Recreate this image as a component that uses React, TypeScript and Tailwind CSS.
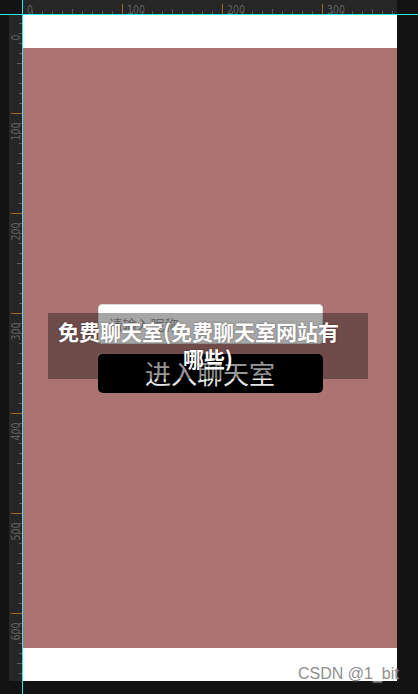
const topTicks = Array.from({ length: 38 }, (_, k) => k);
const leftTicks = Array.from({ length: 67 }, (_, k) => k);

function TopRuler() {
  return (
    <svg width="374" height="14" className="block bg-[#262626]">
      {topTicks.map((k) => {
        const x = 10 * k - 0.5;
        if (k % 10 === 0) {
          const label = String(k * 10);
          return (
            <g key={k}>
              <line x1={x} y1="4" x2={x} y2="14" stroke="#9a6a2a" strokeWidth="1" />
              <text
                x={x + 4.5}
                y="13.5"
                fontSize="13"
                fill="#606060"
                fontFamily="DejaVu Sans, sans-serif"
                textLength={6 * label.length}
                lengthAdjust="spacingAndGlyphs"
              >
                {label}
              </text>
            </g>
          );
        }
        const y1 = k % 5 === 0 ? 9 : 11;
        return <line key={k} x1={x} y1={y1} x2={x} y2="14" stroke="#5a5a5a" strokeWidth="1" />;
      })}
    </svg>
  );
}

function LeftRuler() {
  return (
    <svg width="13" height="666" className="block bg-[#262626]">
      {leftTicks.map((k) => {
        const y = 10 * k - 1.5;
        if (k % 10 === 0) {
          const label = String(k * 10);
          return (
            <g key={k}>
              <line x1="2" y1={y} x2="13" y2={y} stroke="#9a6a2a" strokeWidth="1" />
              <text
                transform={`translate(10.5 ${y + 27}) rotate(-90)`}
                fontSize="12"
                fill="#606060"
                fontFamily="DejaVu Sans, sans-serif"
                textLength={6 * label.length}
                lengthAdjust="spacingAndGlyphs"
              >
                {label}
              </text>
            </g>
          );
        }
        const x1 = k % 5 === 0 ? 8 : 10;
        return <line key={k} x1={x1} y1={y} x2="13" y2={y} stroke="#5a5a5a" strokeWidth="1" />;
      })}
    </svg>
  );
}

export default function App() {
  return (
    <div className="relative grid h-[694px] w-[418px] grid-cols-[22px_1px_374px_1fr] grid-rows-[14px_1px_666px_1fr] overflow-hidden bg-[#131313] font-['Noto_Sans_CJK_SC',sans-serif]">
      <div className="col-start-3 row-start-1">
        <TopRuler />
      </div>
      <div className="col-start-1 row-start-3 pl-[9px]">
        <LeftRuler />
      </div>

      <div className="col-start-3 row-start-3 flex flex-col bg-white">
        <div className="h-[33px]" />
        <div className="flex h-[600px] flex-col items-center justify-center gap-[10px] bg-[#ab7471]">
          <input
            className="h-[40px] w-[225px] rounded-[4px] border border-[#dcdcdc] bg-white px-[10px] text-[14px] outline-none placeholder:text-[#9a9a9a]"
            placeholder="请输入昵称"
          />
          <button className="h-[39px] w-[225px] rounded-[5px] bg-black text-[26px] leading-none text-[#e6e6e6]">
            进入聊天室
          </button>
        </div>
      </div>

      <div className="col-start-2 row-span-4 row-start-1 bg-[#2ee8f2]" />
      <div className="col-span-4 col-start-1 row-start-2 bg-[#2ee8f2]" />

      <div className="absolute left-[48px] top-[313px] h-[66px] w-[320px] bg-black/35 pt-[5px] text-[21px] font-bold leading-[27px] text-white [text-shadow:0_0_2px_rgba(0,0,0,0.4)]">
        <div className="pl-[10px]">免费聊天室(免费聊天室网站有</div>
        <div className="text-center">哪些)</div>
      </div>

      <div className="absolute left-[298px] top-[666px] font-['Liberation_Sans',Arial,sans-serif] text-[16px] leading-none text-[#8e8e8e] [text-shadow:0_0_2px_rgba(255,255,255,0.6)]">
        CSDN @1_bit
      </div>
    </div>
  );
}
